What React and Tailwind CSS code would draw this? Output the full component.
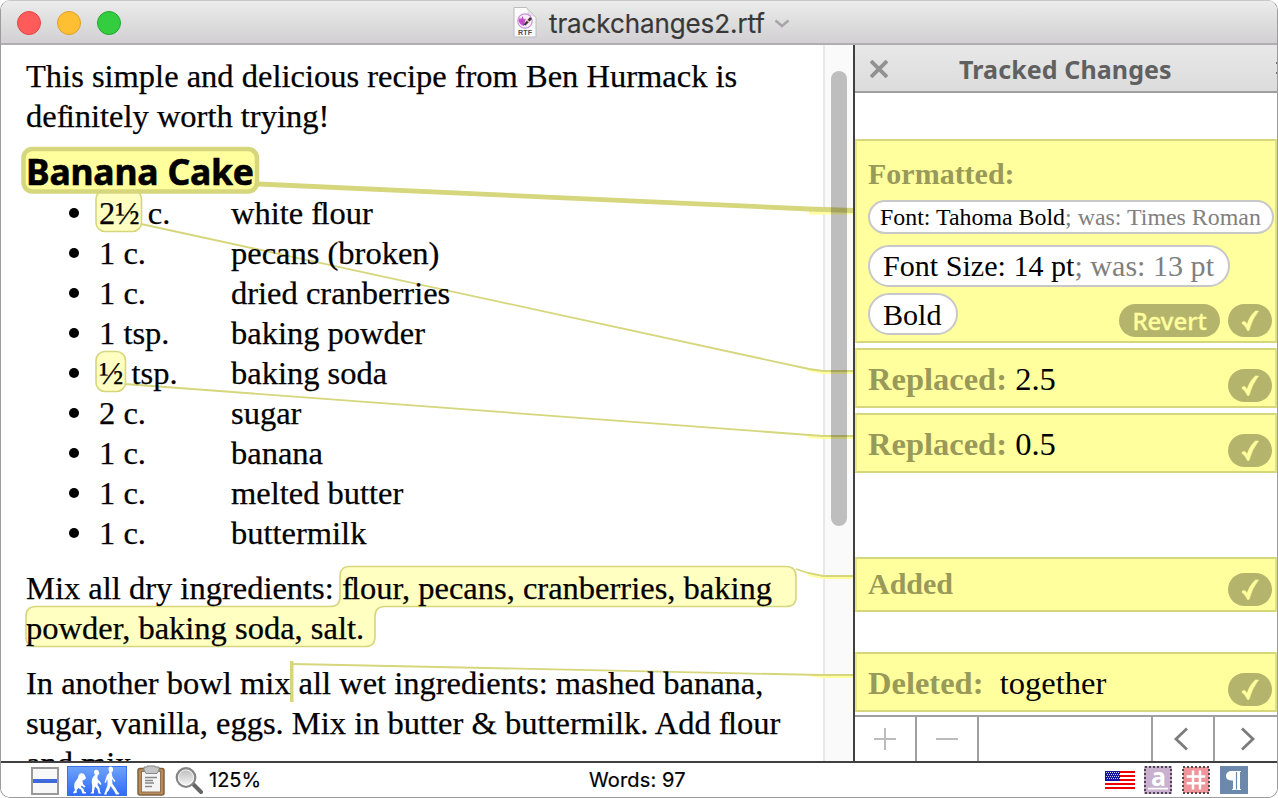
import React from "react";

// Tightens the f before an i or l, as a ligature does.
const F = () => <span className="tracking-[-1.8px]">f</span>;

const ingredients = [
  ["2½ c.", <>white <F />lour</>],
  ["1 c.", "pecans (broken)"],
  ["1 c.", "dried cranberries"],
  ["1 tsp.", "baking powder"],
  ["½ tsp.", "baking soda"],
  ["2 c.", "sugar"],
  ["1 c.", "banana"],
  ["1 c.", "melted butter"],
  ["1 c.", "buttermilk"],
];

function RtfIcon() {
  return (
    <svg width="24" height="32" viewBox="0 0 24 32" className="shrink-0">
      <path d="M1 1.500H13.500L23 11.500V31H1Z" fill="#fbfbfb" stroke="#bdbbbd" strokeWidth="1" />
      <path d="M13.500 1.500Q16 4.500 15 9.500Q20 8.500 23 11.500Z" fill="#e2e2e2" stroke="#c8c8c8" strokeWidth=".5" />
      <circle cx="12" cy="15" r="7.200" fill="#f8eef9" stroke="#cd8fd8" strokeWidth="1.200" />
      <path d="M5.500 14.500L7 11.500L8 13.500L9.500 10L11 13.500L13 12.500L11.500 17L11 20Q7 19 5.500 14.500Z" fill="#c44bca" />
      <path d="M10.500 18.500L17 11L19 13L12.500 19.500Z" fill="#3a3438" />
      <path d="M13.500 14L16.500 16" stroke="#e8c890" strokeWidth="1.500" />
      <text x="12.200" y="29.300" textAnchor="middle" className="fill-[#505050] font-['Liberation_Sans'] text-[7px] font-bold tracking-[0.2px]">RTF</text>
    </svg>
  );
}

function Highlights() {
  return (
    <svg width="852" height="716" viewBox="1 45 852 716" className="absolute top-0 left-0" fill="none">
      <g fill="#ffffc2" stroke="#d6d67c" strokeWidth="1.600">
        <rect x="96" y="190" width="45.500" height="41.500" rx="9" />
        <rect x="96" y="351.500" width="29.500" height="40" rx="9" />
        <path d="M349 566.500H786Q796 566.500 796 576.500V597Q796 606.500 786 606.500H385Q375 606.500 375 616.500V637Q375 646.500 365 646.500H36Q26 646.500 26 637V616.500Q26 606.500 36 606.500H330Q340 606.500 340 597V576.500Q340 566.500 349 566.500Z" />
      </g>
      <rect x="290" y="661" width="3.500" height="41" fill="#d6d67c" />
      <g stroke="#ffff9e" strokeWidth="2">
        <path d="M809 212.500H853" strokeWidth="4" />
        <path d="M808 370L823 373H853M808 437L823 438H853M808 575L823 578H853M808 675L823 677H853" />
      </g>
      <g stroke="#d6d67c" strokeWidth="1.800">
        <path d="M258 184L809 209L853 210.500" strokeWidth="4.800" />
        <path d="M141 224L809 369L823 371H853" />
        <path d="M125 384L809 435L823 436H853" />
        <path d="M796 569L808 573L823 576H853" />
        <path d="M293 664L823 675H853" />
      </g>
      <rect x="23.500" y="149" width="233.500" height="42.500" rx="9" fill="#ffff9e" stroke="#d6d67c" strokeWidth="4.500" />
    </svg>
  );
}

function Approve() {
  return (
    <span className="flex h-[33px] w-11 items-center justify-center rounded-full bg-[#b4b46c]">
      <svg width="18" height="22" viewBox="0 0 18 22">
        <path d="M1 12.500Q4 9.500 6 14.500Q9 5.500 14.500 1L17.500 1Q11 9 8 20.500H6.500Q4 15 1 13.500Z" fill="#ffff9e" stroke="#ffff9e" strokeWidth=".6" />
      </svg>
    </span>
  );
}

function Change({ label, value, className }) {
  return (
    <div className={"flex shrink-0 justify-between border-2 border-[#d6d67c] border-r-[#e0e084] border-l-[#e8e888] bg-[#ffff9e] pr-[3px] pl-[11px] " + className}>
      <div className="leading-[40px] whitespace-pre">
        <b className="text-[#999959]">{label}</b>
        {value}
      </div>
      <div className="flex items-end pb-1"><Approve /></div>
    </div>
  );
}

function TrackedChanges() {
  return (
    <aside className="flex w-[424px] shrink-0 flex-col border-l-2 border-[#404040] bg-white">
      <header className="flex h-12 shrink-0 items-center border-b-2 border-[#a0a0a0] bg-linear-to-b from-[#e8e8e8] to-[#dcdcdc] pl-[15px]">
        <svg width="18" height="18" viewBox="0 0 18 18" className="mt-0.5"><path d="M1 1L17 17M17 1L1 17" stroke="#929292" strokeWidth="3.800" /></svg>
        <h2 className="mt-[3px] ml-[71px] font-['Noto_Sans'] text-[25px] font-bold tracking-[0.1px] whitespace-nowrap text-[#606060]">Tracked Changes</h2>
        <div className="ml-auto h-3 w-px border-y-2 border-[#707070]" />
      </header>
      <div className="flex h-[622px] flex-col pt-[46px] font-['Liberation_Serif',serif]">
        <section className="h-[204px] shrink-0 border-2 border-[#d6d67c] border-r-[#e0e084] border-l-[#e8e888] bg-[#ffff9e] pt-[13px] pl-[11px]">
          <h3 className="text-[30px] leading-[40px] font-bold text-[#999959]">Formatted:</h3>
          <div className="mt-[6px] h-[34px] w-[406px] rounded-full border-2 border-[#c8c8c8] bg-white pl-[10px] text-[23.9px] leading-[31px] whitespace-nowrap">
            Font: Tahoma Bold<span className="text-[#808080]">; was: Times Roman</span>
          </div>
          <div className="mt-[11px] h-[42px] w-[362px] rounded-full border-2 border-[#c8c8c8] bg-white pl-[13px] text-[30.1px] leading-[38px] whitespace-nowrap">
            Font Size: 14 pt<span className="text-[#808080]">; was: 13 pt</span>
          </div>
          <div className="mt-[6px] flex pr-[3px]">
            <div className="h-[42px] w-[90px] rounded-full border-2 border-[#c8c8c8] bg-white pl-[13px] text-[30.1px] leading-[40px]">Bold</div>
            <div className="mt-[11px] mr-2 ml-auto h-[33px] w-[101px] rounded-full bg-[#b4b46c] text-center font-['Noto_Sans'] text-[24px] leading-[33px] font-medium text-[#ffff9e] [-webkit-text-stroke:0.4px]">Revert</div>
            <div className="mt-[11px]"><Approve /></div>
          </div>
        </section>
        <Change label="Replaced:" value=" 2.5" className="mt-[5px] h-[60px] pt-[9px] text-[32.5px]" />
        <Change label="Replaced:" value=" 0.5" className="mt-[5px] h-[60px] pt-[9px] text-[32.5px]" />
        <Change label="Added" value="" className="mt-[84px] h-[55px] pt-[5px] text-[30px]" />
        <Change label="Deleted:" value="  together" className="mt-10 h-[60px] pt-[9px] text-[32.5px]" />
      </div>
      <footer className="flex h-[46px] shrink-0 border-t-2 border-[#a0a0a0]">
        <div className="flex w-[62px] items-center justify-center border-r-2 border-[#a0a0a0]">
          <svg width="22" height="22" viewBox="0 0 22 22"><path d="M0 11H22M11 0V22" stroke="#bcbcbc" strokeWidth="2" /></svg>
        </div>
        <div className="flex w-[62px] items-center justify-center border-r-2 border-[#a0a0a0]">
          <svg width="22" height="22" viewBox="0 0 22 22"><path d="M0 11H22" stroke="#bcbcbc" strokeWidth="2" /></svg>
        </div>
        <div className="flex-1" />
        <div className="flex w-[62px] items-center justify-center border-l-2 border-[#a0a0a0] pr-1">
          <svg width="16" height="26" viewBox="0 0 16 26"><path d="M14 2.500L3 13L14 23.500" fill="none" stroke="#7c7c7c" strokeWidth="2.800" /></svg>
        </div>
        <div className="flex w-16 items-center justify-center border-l-2 border-[#a0a0a0] pl-[3px]">
          <svg width="16" height="26" viewBox="0 0 16 26"><path d="M2 2.500L13 13L2 23.500" fill="none" stroke="#7c7c7c" strokeWidth="2.800" /></svg>
        </div>
      </footer>
    </aside>
  );
}

function Evolution() {
  return (
    <svg width="60" height="30" viewBox="0 0 60 30" className="ml-2">
      <defs><linearGradient id="evo" x1="0" y1="0" x2="0" y2="1"><stop stopColor="#6fa4fb" /><stop offset="1" stopColor="#2f6bf6" /></linearGradient></defs>
      <rect x=".5" y=".5" width="59" height="29" fill="url(#evo)" stroke="#3c6fe8" />
      <g fill="#fff">
        <path d="M13 7.500Q16.500 6.500 18 9.500L19 12.500L17 14L15.500 14.500L16 18L18.500 20.500L17.500 21.500L14.500 19.500L14 21L16.500 23L17.500 26H19V27.500H15.500L14 23.500L11.500 22L9.500 24L10 26.500L7 27.500L6 26.500L8 24Q6 19 8.500 15.500Q10 13 11 12Q11 8.500 13 7.500Z" />
        <path d="M28 4Q31 3 32 6L32.300 8L30.500 9.500L30.500 13L33 15.500L34.500 18L33.500 19L31 16.500L30.500 19L32.500 22L33 26L34.500 27.500H31.500L30.500 23L28 20.500L27 24.500L27 27.500H23.500L25 25.500L25.200 19Q24 14 26 11L28 9Q26 6 28 4Z" />
        <path d="M42.500 .7Q45.500 0 46 2.500L46 5L44.500 6.500L45.500 11L48.500 15L47.500 16L45 13L45.500 18L48.500 22L51 26.500L52.500 27L51.500 28.500H49L46.500 24L43.500 20L42 24L39.500 27L40 28.500H37L38 26L40.500 19L40.500 13L38.500 17L37.500 16.500L40 9L42.500 6.500Q40.500 2 42.500 .7Z" />
      </g>
    </svg>
  );
}

function Clipboard() {
  return (
    <svg width="28" height="32" viewBox="0 0 28 32" className="ml-[10px]">
      <rect x="1" y="3.500" width="26" height="26.500" rx="2" fill="#b98b5b" stroke="#81603e" strokeWidth="1.500" />
      <rect x="4.500" y="6.500" width="19" height="20.500" fill="#f4f4f4" stroke="#8c7358" strokeWidth="1" />
      <path d="M7 2H10V1H18V2H22V5L20 8.500H9L7 5Z" fill="#c5c5c5" stroke="#888" strokeWidth="1" />
      <path d="M8 12.500H20M8 15.500H16M8 18H17M8 21.500H15" stroke="#888" strokeWidth="1.400" />
    </svg>
  );
}

function Magnifier() {
  return (
    <svg width="28" height="29" viewBox="0 0 28 29" className="ml-[10px]">
      <defs><linearGradient id="lens" x1="0" y1="0" x2="0" y2="1"><stop stopColor="#b8b8b8" /><stop offset="1" stopColor="#fafafa" /></linearGradient></defs>
      <path d="M17.500 17.500L26 26" stroke="#666" strokeWidth="4" strokeLinecap="round" />
      <circle cx="11" cy="11.500" r="9.300" fill="url(#lens)" stroke="#858585" strokeWidth="2.200" />
      <circle cx="11" cy="11.500" r="7.500" fill="none" stroke="#fff" strokeOpacity=".7" />
    </svg>
  );
}

function Flag() {
  return (
    <svg width="30" height="18" viewBox="0 0 30 18" shapeRendering="crispEdges">
      <rect width="30" height="18" fill="#fff" />
      <path d="M0 1H30M0 5H30M0 9H30M0 13H30M0 17H30" stroke="#ee0000" strokeWidth="2" />
      <rect width="15" height="10" fill="#1414a0" />
      <path d="M1 1.500H15M2 3.500H15M1 5.500H15M2 7.500H15" stroke="#ccccf0" strokeWidth="1" strokeDasharray="1 1" />
    </svg>
  );
}

function StatusBar() {
  return (
    <footer className="flex h-9 shrink-0 border-t-2 border-[#404040] bg-white font-['Inter'] text-black">
      <div className="flex w-[588px] items-center pt-px pl-[30px]">
        <svg width="28" height="28" viewBox="0 0 28 28">
          <rect x="1" y="1" width="26" height="26" fill="#f8f8f8" stroke="#999" strokeWidth="2" />
          <rect x="2" y="12" width="24" height="4" fill="#3f68d8" />
        </svg>
        <Evolution />
        <Clipboard />
        <Magnifier />
        <span className="mb-px ml-[6px] text-[20px] tracking-[0px] [-webkit-text-stroke:0.2px]">125%</span>
      </div>
      <span className="text-[20px] leading-[34px] tracking-[0.15px] whitespace-nowrap [-webkit-text-stroke:0.2px]">Words: 97</span>
      <div className="mr-[29px] ml-auto flex items-center">
        <Flag />
        <div className="ml-[9px] size-7 overflow-visible bg-[#c9b0cf]">
          <svg width="28" height="28" viewBox="0 0 28 28" className="overflow-visible">
            <rect x="1" y="1" width="26" height="26" stroke="#4c4450" fill="none" strokeWidth="2" strokeDasharray="2 2" />
            <text x="14.500" y="19.700" textAnchor="middle" className="fill-white font-['Noto_Sans'] text-[25px] font-bold">a</text>
            <path d="M4 22.700H24" stroke="#fff" strokeWidth="1.800" />
          </svg>
        </div>
        <svg width="28" height="28" viewBox="0 0 28 28" className="ml-[10px]">
          <rect x="1" y="1" width="26" height="26" fill="#f0959a" stroke="#54494c" strokeWidth="2" strokeDasharray="2 2" />
          <path d="M11 4.500V23.500M18 4.500V23.500M4.700 10.500H23.300M4.700 17.200H23.300" stroke="#fff" strokeWidth="2.500" />
        </svg>
        <svg width="28" height="28" viewBox="0 0 28 28" className="ml-[10px]">
          <rect width="28" height="28" fill="#6c88aa" />
          <path d="M21 5H12C8 5 6 7 6 10S8 14.500 13 14.500V23H12V24H21V23H20V6H21Z" fill="#fff" />
          <path d="M16.500 6V23.500" stroke="#6c88aa" strokeWidth="1.200" />
        </svg>
      </div>
    </footer>
  );
}

export default function App() {
  return (
    <div className="flex h-[798px] w-[1278px] flex-col overflow-hidden rounded-[10px] border border-[#9c9c9c] border-t-[#c8c6c8] bg-white">
      <header className="flex h-11 shrink-0 items-center border-b-2 border-[#b0aeb0] bg-linear-to-b from-[#ececec] to-[#d2d0d2]">
        <div className="flex w-[512px] gap-4 pt-px pl-4">
          <span className="size-6 rounded-full border border-[#e2453f] bg-[#ff5b5a]" />
          <span className="size-6 rounded-full border border-[#e09f24] bg-[#ffbf32]" />
          <span className="size-6 rounded-full border border-[#1fa82c] bg-[#34cd40]" />
        </div>
        <RtfIcon />
        <h1 className="mt-[3px] ml-3 font-['Inter'] text-[26px] tracking-[-0.1px] whitespace-nowrap text-[#383838] [-webkit-text-stroke:0.2px]">trackchanges2.rtf</h1>
        <svg width="16" height="10" viewBox="0 0 16 10" className="mt-[3px] ml-[9px]"><path d="M1.500 1.500L8 7L14.500 1.500" fill="none" stroke="#a8a6a8" strokeWidth="2.600" /></svg>
      </header>
      <div className="flex h-[716px] shrink-0">
        <main className="relative flex h-full w-[852px] overflow-hidden font-['Liberation_Serif',serif] text-[32.5px] leading-[40px] text-black">
          <div className="ml-auto w-[30px] border-l-2 border-[#e8e8e8] bg-[#fafafa]" />
          <Highlights />
          <article className="absolute inset-0 pt-[11px] pl-[25px] whitespace-nowrap [-webkit-text-stroke:0.25px]">
            <p>This simple and delicious recipe from Ben Hurmack is<br />de<F />initely worth trying!</p>
            <h2 className="h-[57px] pt-[15px] font-['Noto_Sans'] text-[35.5px] font-bold tracking-[-0.2px] [-webkit-text-stroke:0.6px]">Banana Cake</h2>
            <ul>
              {ingredients.map(([amount, name], i) => (
                <li key={i} className="flex h-10 items-center">
                  <span className="ml-[43px] size-[10px] rounded-full bg-black" />
                  <span className="ml-5 w-[132px]">{amount}</span>
                  <span>{name}</span>
                </li>
              ))}
            </ul>
            <p className="mt-[15px]">Mix all dry ingredients: <F />lour, pecans, cranberries, baking<br />powder, baking soda, salt.</p>
            <p className="mt-[15px]">In another bowl mix all wet ingredients: mashed banana,<br />sugar, vanilla, eggs. Mix in butter &amp; buttermilk. Add <F />lour<br />and mix.</p>
          </article>
          <div className="absolute top-[26px] left-[830px] h-[455px] w-4 rounded-full bg-black/24" />
        </main>
        <TrackedChanges />
      </div>
      <StatusBar />
    </div>
  );
}
